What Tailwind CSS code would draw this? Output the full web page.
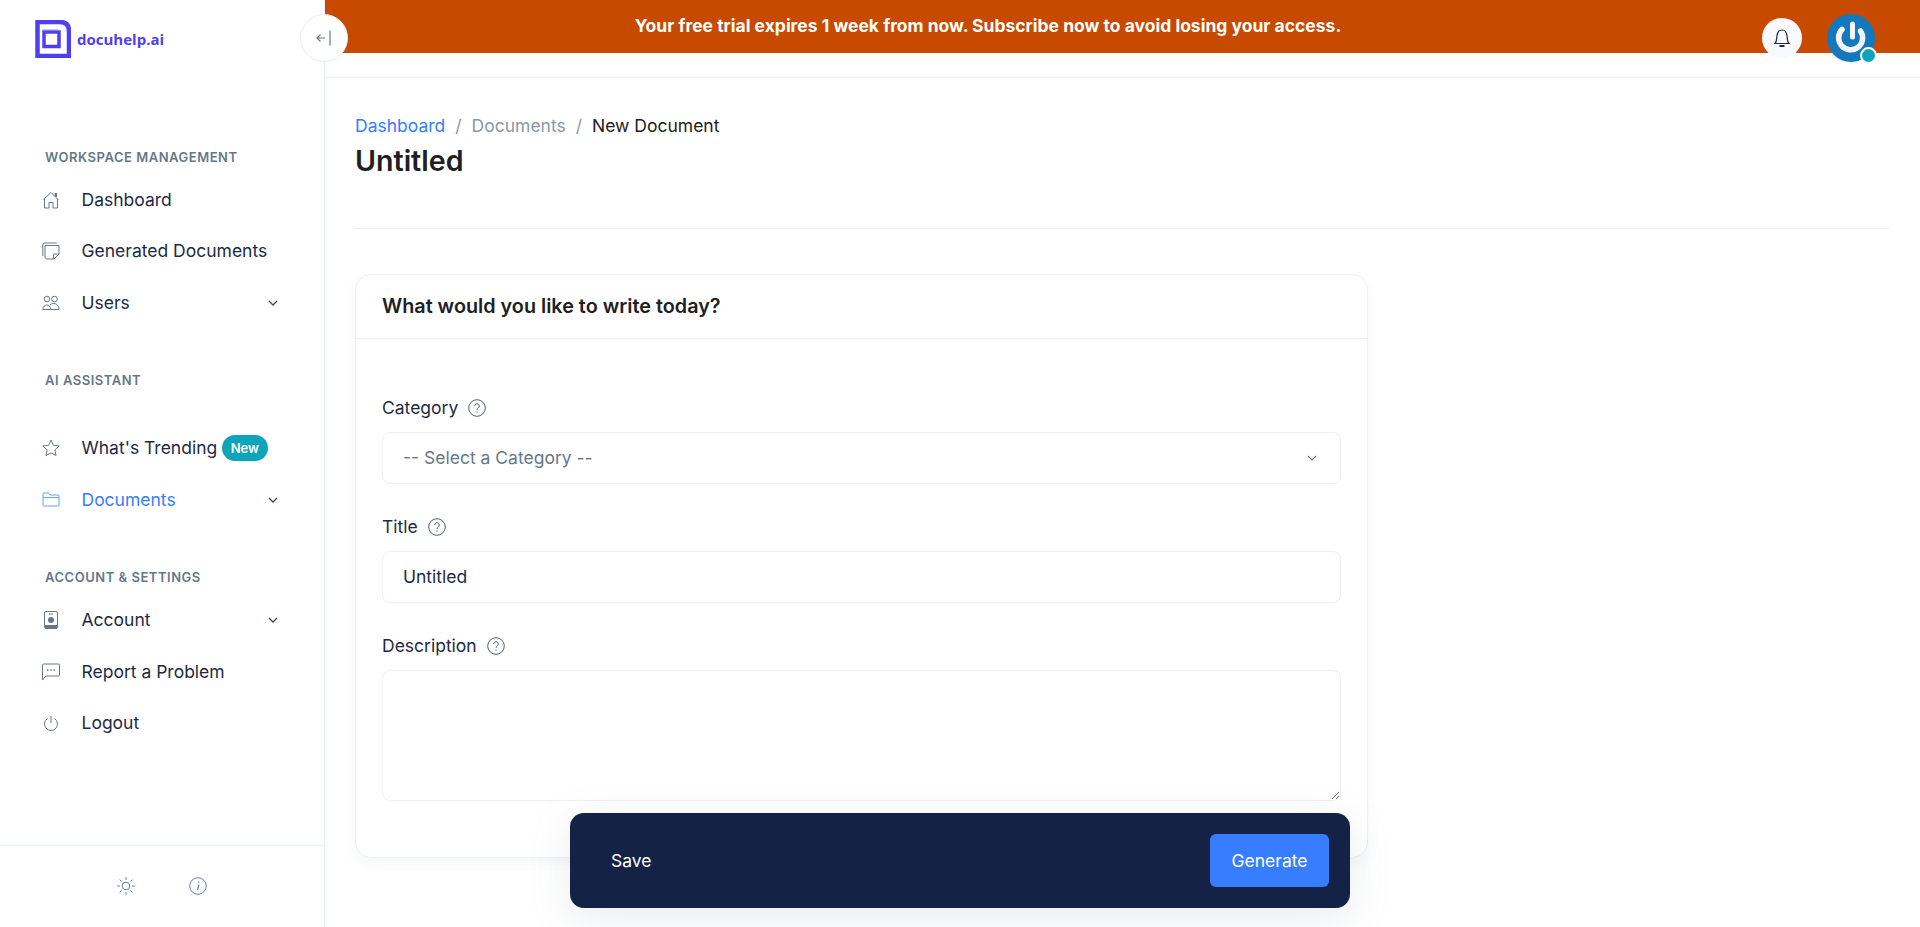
<!DOCTYPE html>
<html><head><meta charset="utf-8">
<script src="https://cdn.jsdelivr.net/npm/@tailwindcss/browser@4"></script>
</head>
<body class="bg-white font-['Inter',sans-serif] text-[#1e2022] overflow-hidden">
<div class="relative flex h-[927px] w-[1920px] overflow-hidden">
  <aside class="relative flex h-full w-[325px] shrink-0 flex-col border-r border-[#e9edf5] bg-white">
    <div class="flex h-[149px] items-start pl-[35px] pt-[20px]">
      <svg class="h-[38px] w-[36px]" viewBox="0 0 36 38" fill="none"><path d="M2.500 2H25Q34 2 34 11V36H2.500Z" stroke="#4f3ff0" stroke-width="4.500"/><path d="M9 12H24V26.500H9Z" stroke="#4f3ff0" stroke-width="3.500"/><path d="M7.500 10H23" stroke="#8f86f5" stroke-width="1"/></svg>
      <span class="ml-[6px] mt-[8px] font-['Open_Sans',sans-serif] text-[15px] font-bold leading-[22px] text-[#4f3ff0]">docuhelp.ai</span>
    </div>
    <nav class="flex flex-1 flex-col pl-[42px] pr-[45px]">
      <h6 class="mb-[9px] h-[16px] pl-[3px] text-[13px] font-semibold uppercase leading-[16px] tracking-[0.04em] text-[#677788]">Workspace Management</h6>
      <a class="flex h-[51.5px] items-center text-[17.5px] text-[#1e2a44]"><svg class="mr-[21.5px] h-[18px] w-[18px] shrink-0 text-[#677788]" viewBox="0 0 18 18" fill="none" stroke="currentColor" stroke-width="1"><path d="M1.500 8.500 9 1.500l7 7M2.500 8v9h4.500v-5.500h4V17h4.500V8"/><path d="M13 2.500h1.500v3.500L13 4.500Z" fill="currentColor"/></svg><span>Dashboard</span></a>
      <a class="flex h-[51.5px] items-center text-[17.5px] text-[#1e2a44]"><svg class="mr-[21.5px] h-[18px] w-[18px] shrink-0 text-[#677788]" viewBox="0 0 18 18" fill="none" stroke="currentColor" stroke-width="1"><path d="M.8 14V3q0-2 2-2h12"/><path d="M3 15V3.500h14V12l-5 5H5q-2 0-2-2Z"/><path d="M11.500 17v-5h5.500"/></svg><span>Generated Documents</span></a>
      <a class="flex h-[51.5px] items-center text-[17.5px] text-[#1e2a44]"><svg class="mr-[21.5px] h-[16px] w-[18px] shrink-0 text-[#677788]" viewBox="0 0 18 16" fill="none" stroke="currentColor" stroke-width="1"><circle cx="5" cy="4" r="2.800"/><circle cx="12.500" cy="4" r="2.800"/><path d="M.8 14.500c0-6 8-6 8 0ZM8 10c3-3 9-1.500 9 4.500h-8"/></svg><span>Users</span><svg class="ml-auto h-[12px] w-[12px] text-[#3d4a63]" viewBox="0 0 12 12" fill="none" stroke="currentColor" stroke-width="1.300"><path d="m2 4 4 4 4-4"/></svg></a>
      <h6 class="mb-[35px] mt-[43px] h-[16px] pl-[3px] text-[13px] font-semibold uppercase leading-[16px] tracking-[0.04em] text-[#677788]">AI Assistant</h6>
      <a class="flex h-[51.5px] items-center text-[17.5px] text-[#1e2a44]"><svg class="mr-[21.5px] h-[18px] w-[18px] shrink-0 text-[#677788]" viewBox="0 0 18 18" fill="none" stroke="currentColor" stroke-width="1"><path d="m9 1 2.400 5.300 5.800.7-4.300 3.900 1.200 5.700L9 13.800l-5.100 2.800 1.200-5.700L.8 7l5.800-.7Z"/></svg><span>What's Trending</span><span class="ml-[5px] rounded-full bg-[#0ea5bb] px-[8.5px] py-[3px] text-[13px] font-semibold leading-[20px] text-white">New</span></a>
      <a class="flex h-[51.5px] items-center text-[17.5px] text-[#377dff]"><svg class="mr-[21.5px] h-[15px] w-[18px] shrink-0 text-[#60a5fa]" viewBox="0 0 18 15" fill="none" stroke="currentColor" stroke-width="1"><path d="M1 13V2q0-1 1-1h4.500L8 3h8q1 0 1 1v9q0 1-1 1H2q-1 0-1-1ZM1 5.500h16"/></svg><span>Documents</span><svg class="ml-auto h-[12px] w-[12px] text-[#3d4a63]" viewBox="0 0 12 12" fill="none" stroke="currentColor" stroke-width="1.300"><path d="m2 4 4 4 4-4"/></svg></a>
      <h6 class="mb-[10px] mt-[43px] h-[16px] pl-[3px] text-[13px] font-semibold uppercase leading-[16px] tracking-[0.04em] text-[#677788]">Account &amp; Settings</h6>
      <a class="flex h-[51.5px] items-center text-[17.5px] text-[#1e2a44]"><svg class="mr-[21.5px] h-[18px] w-[18px] shrink-0 text-[#677788]" viewBox="0 0 18 18" fill="none"><rect x="2.500" y=".5" width="13" height="17" rx="1.500" stroke="currentColor"/><circle cx="9" cy="9" r="3" fill="currentColor"/><path d="M7 3h4" stroke="currentColor"/><path d="M3 14h12v3.500H3Z" fill="currentColor"/></svg><span>Account</span><svg class="ml-auto h-[12px] w-[12px] text-[#3d4a63]" viewBox="0 0 12 12" fill="none" stroke="currentColor" stroke-width="1.300"><path d="m2 4 4 4 4-4"/></svg></a>
      <a class="flex h-[51.5px] items-center text-[17.5px] text-[#1e2a44]"><svg class="mr-[21.5px] h-[18px] w-[18px] shrink-0 text-[#677788]" viewBox="0 0 18 18" fill="none" stroke="currentColor" stroke-width="1"><path d="M.5 17V2q0-1 1-1h15q1 0 1 1v10q0 1-1 1H4Z"/><path d="M5 7h1.500M8.300 7h1.500M11.500 7H13" stroke-width="1.300"/></svg><span>Report a Problem</span></a>
      <a class="flex h-[51.5px] items-center text-[17.5px] text-[#1e2a44]"><svg class="mr-[21.5px] h-[18px] w-[18px] shrink-0 text-[#677788]" viewBox="0 0 18 18" fill="none" stroke="currentColor" stroke-width="1"><path d="M5.500 4.500a6.500 6.500 0 1 0 7 0M9 2v7"/></svg><span>Logout</span></a>
    </nav>
    <div class="flex h-[82px] items-center justify-center gap-[54px] border-t border-[#e9edf5] pb-[2px]">
      <svg class="h-[18px] w-[18px] text-[#5b92cf]" viewBox="0 0 18 18" fill="none" stroke="currentColor" stroke-width="1"><circle cx="9" cy="9" r="3.800" stroke="#677788"/><path d="M9 0v3M9 15v3M0 9h3M15 9h3M2.600 2.600l2 2M13.400 13.400l2 2M2.600 15.400l2-2M13.400 4.600l2-2"/></svg>
      <svg class="h-[18px] w-[18px] text-[#5f84ad]" viewBox="0 0 18 18" fill="none" stroke="currentColor" stroke-width="1"><circle cx="9" cy="9" r="8.300"/><path d="M9.800 7.500 8.600 13M9.600 4.500v1.300" stroke-width="1.300"/></svg>
    </div>
  </aside>
  <button class="absolute left-[300px] top-[14px] z-10 flex h-[48px] w-[48px] items-center justify-center rounded-full border border-[#e9edf5] bg-white text-[#677788]"><svg class="h-[16px] w-[16px]" viewBox="0 0 16 16" fill="none" stroke="currentColor" stroke-width="1.200"><path d="M9 8H1M4.500 4.500 1 8l3.500 3.500M14 .5v15"/></svg></button>
  <main class="relative min-w-0 flex-1">
    <header class="relative h-[78px] border-b border-[#eef0f4]">
      <div class="flex h-[53px] items-center justify-center bg-[#c74a00] pr-[269px] text-[17.5px] font-bold text-white">Your free trial expires 1 week from now. Subscribe now to avoid losing your access.</div>
      <div class="absolute right-[45px] top-[14px] flex items-start gap-[25px]">
        <span class="mt-[4px] flex h-[40px] w-[40px] items-center justify-center rounded-full bg-[#f8fafd]"><svg class="h-[20px] w-[18px] text-[#1e2a44]" viewBox="0 0 18 20" fill="none" stroke="currentColor" stroke-width="1.200"><path d="M2 15.500c2-2 1.500-4.500 2-8C4.500 4 6.500 2 9 2s4.500 2 5 5.500c.5 3.500 0 6 2 8Z"/><path d="M6.500 18h5" stroke-width="2"/></svg></span>
        <span class="relative block h-[48px] w-[48px]"><svg class="h-[48px] w-[48px]" viewBox="0 0 48 48"><circle cx="24" cy="24" r="24" fill="#1478bd"/><path d="M15 15.500A12 12 0 1 0 33.500 17" fill="none" stroke="#f3f4f8" stroke-width="5.500" stroke-linecap="round"/><path d="M25.500 10v13" stroke="#f3f4f8" stroke-width="5" stroke-linecap="round"/></svg><span class="absolute left-[33px] top-[33px] h-[17px] w-[17px] rounded-full border-2 border-white bg-[#0ea5bb]"></span></span>
      </div>
    </header>
    <div class="pl-[30px] pr-[30px]">
      <nav class="mt-[36px] flex h-[24px] items-center text-[17.5px] leading-[24px]"><a class="text-[#377dff]">Dashboard</a><span class="px-[10px] text-[#8c98a4]">/</span><a class="text-[#8c98a4]">Documents</a><span class="px-[10px] text-[#8c98a4]">/</span><span class="text-[#1e2022]">New Document</span></nav>
      <h1 class="mt-[6px] text-[28.6px] font-semibold leading-[34px] text-[#1e2022]">Untitled</h1>
      <hr class="mt-[50px] border-[#eef0f4]">
      <section class="mt-[45px] h-[584px] w-[1013px] rounded-[16px] border border-[#eef0f4] bg-white shadow-[0_6px_12px_rgba(140,152,164,0.08)]">
        <div class="flex h-[64px] items-center border-b border-[#eef0f4] px-[26px]"><h2 class="text-[19.8px] font-semibold text-[#1e2022]">What would you like to write today?</h2></div>
        <form class="px-[26px] pt-[56px]">
          <label class="flex h-[24px] items-center pt-[2px] text-[17.5px] text-[#1e2a44]">Category<svg class="ml-[10px] h-[18px] w-[18px] text-[#4f5f75]" viewBox="0 0 18 18" fill="none" stroke="currentColor" stroke-width="1"><circle cx="9" cy="9" r="8.300"/><path d="M6.700 7a2.300 2.300 0 1 1 3.500 2c-.8.500-1.200 1-1.200 2"/><path d="M9 12.500v1.300"/></svg></label>
          <div class="mt-[13px] flex h-[52px] items-center justify-between rounded-[8px] border border-[#eef0f4] pl-[20px] pr-[22px] text-[17.5px] text-[#677788]"><span>-- Select a Category --</span><svg class="h-[12px] w-[12px] text-[#677788]" viewBox="0 0 12 12" fill="none" stroke="currentColor" stroke-width="1.100"><path d="m2 4 4 4 4-4"/></svg></div>
          <label class="mt-[30px] flex h-[24px] items-center pt-[2px] text-[17.5px] text-[#1e2a44]">Title<svg class="ml-[10px] h-[18px] w-[18px] text-[#4f5f75]" viewBox="0 0 18 18" fill="none" stroke="currentColor" stroke-width="1"><circle cx="9" cy="9" r="8.300"/><path d="M6.700 7a2.300 2.300 0 1 1 3.500 2c-.8.500-1.200 1-1.200 2"/><path d="M9 12.500v1.300"/></svg></label>
          <input class="mt-[13px] block h-[52px] w-full rounded-[8px] border border-[#eef0f4] px-[20px] pb-[2px] text-[17.5px] text-[#1e2a44]" value="Untitled">
          <label class="mt-[30px] flex h-[24px] items-center pt-[2px] text-[17.5px] text-[#1e2a44]">Description<svg class="ml-[10px] h-[18px] w-[18px] text-[#4f5f75]" viewBox="0 0 18 18" fill="none" stroke="currentColor" stroke-width="1"><circle cx="9" cy="9" r="8.300"/><path d="M6.700 7a2.300 2.300 0 1 1 3.500 2c-.8.500-1.200 1-1.200 2"/><path d="M9 12.500v1.300"/></svg></label>
          <textarea class="mt-[13px] block h-[131px] w-full rounded-[8px] border border-[#eef0f4] px-[20px] py-[12px]"></textarea>
        </form>
      </section>
    </div>
  </main>
  <div class="absolute left-[570px] top-[813px] z-20 flex h-[95px] w-[780px] items-center justify-between rounded-[14px] bg-[#142245] pl-[41px] pr-[21px] shadow-[0_10px_40px_rgba(140,152,164,0.18)]">
    <button class="pt-[2px] text-[17.5px] text-white">Save</button>
    <button class="h-[53px] w-[119px] rounded-[6px] bg-[#377dff] pt-[1px] text-[17.5px] text-white">Generate</button>
  </div>
</div>
</body></html>
